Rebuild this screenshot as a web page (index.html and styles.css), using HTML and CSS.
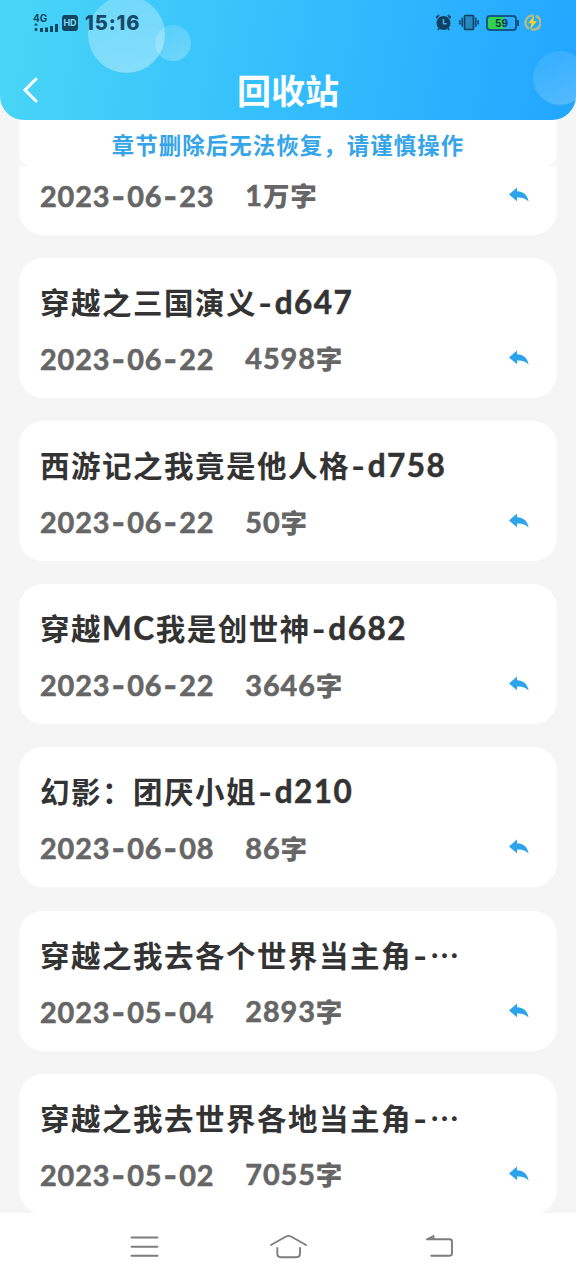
FILE: index.html
```html
<!DOCTYPE html>
<html lang="zh-CN">
<head>
  <meta charset="UTF-8" />
  <meta name="viewport" content="width=device-width, initial-scale=1.0"/>
  <title>回收站</title>
  <link rel="stylesheet" href="styles.css">
</head>
<body>
  <!-- shared icon for the restore buttons -->
  <svg width="0" height="0" class="sprite">
    <symbol id="reply" viewBox="0 0 20 16">
      <path d="M0 7.5 L8 0.5 V4.3 C14.5 4.5 18.6 8.2 19.6 14.6 C16.6 11.2 13.3 10.2 8 10.4 V14.3 Z"/>
    </symbol>
  </svg>

  <div class="screen">
    <header class="header">
      <span class="bubble bubble-big"></span>
      <span class="bubble bubble-small"></span>
      <span class="bubble bubble-right"></span>
      <div class="status-bar">
        <div class="status-left">
          <div class="network">
            <span>4G</span>
            <svg width="27" height="9" viewBox="0 0 27 9">
              <path d="M1 2.5 L3 0 L5 2.5 Z M1.8 5 h2.4 v3 h-2.4 Z M7 5 h3 v4 h-3 Z M12 4.5 h3 v4.5 h-3 Z M17 3 h3 v6 h-3 Z M22 1 h3 v8 h-3 Z"/>
            </svg>
          </div>
          <span class="hd">HD</span>
          <span class="time">15:16</span>
        </div>
        <div class="status-right">
          <svg width="17" height="17" viewBox="0 0 17 17">
            <circle cx="8.5" cy="9" r="7" fill="#123f60"/>
            <path d="M1.2 4 L4 1.2 M15.8 4 L13 1.2 M4 14.5 L2.8 16 M13 14.5 L14.2 16" stroke="#123f60" stroke-width="1.8"/>
            <path d="M8.5 5 V9.8 H11.6" fill="none" stroke="#2fb1fd" stroke-width="1.6"/>
          </svg>
          <svg width="20" height="17" viewBox="0 0 20 17">
            <rect x="5.5" y="1.5" width="9" height="14" rx="1" fill="#2689c4" stroke="#123f60" stroke-width="1.7"/>
            <path d="M3.2 3.7 V12.7 M0.8 6.3 V10.5 M16.8 3.7 V12.7 M19.2 6.3 V10.5" stroke="#123f60" stroke-width="1.5"/>
          </svg>
          <div class="battery"><span>59</span></div>
          <svg width="17" height="17" viewBox="0 0 17 17">
            <path d="M5.2 14.8 A7 7 0 0 1 9.5 1.7 M11.8 2 A7 7 0 0 1 7.3 15.3" fill="none" stroke="#b5bd83" stroke-width="2.4"/>
            <path d="M10.3 1.2 L4.3 9.3 H7.5 L6 15.8 L12.9 7 H9.3 Z" fill="#fcd01f"/>
          </svg>
        </div>
      </div>
      <div class="title-bar">
        <svg class="back" width="16" height="28" viewBox="0 0 16 28">
          <path d="M14 3 L3 14 L14 25"/>
        </svg>
        <h1>回收站</h1>
      </div>
    </header>

    <div class="notice">章节删除后无法恢复，请谨慎操作</div>

    <main class="list">
      <div class="card">
        <div class="meta">
          <span class="date">2023<i>-</i>06<i>-</i>23</span>
          <span class="count">1<b>万字</b></span>
          <svg class="restore"><use href="#reply"/></svg>
        </div>
      </div>
      <div class="card">
        <h2>穿越之三国演义<i>-</i><em>d647</em></h2>
        <div class="meta">
          <span class="date">2023<i>-</i>06<i>-</i>22</span>
          <span class="count">4598<b>字</b></span>
          <svg class="restore"><use href="#reply"/></svg>
        </div>
      </div>
      <div class="card">
        <h2>西游记之我竟是他人格<i>-</i><em>d758</em></h2>
        <div class="meta">
          <span class="date">2023<i>-</i>06<i>-</i>22</span>
          <span class="count">50<b>字</b></span>
          <svg class="restore"><use href="#reply"/></svg>
        </div>
      </div>
      <div class="card">
        <h2>穿越<em>MC</em>我是创世神<i>-</i><em>d682</em></h2>
        <div class="meta">
          <span class="date">2023<i>-</i>06<i>-</i>22</span>
          <span class="count">3646<b>字</b></span>
          <svg class="restore"><use href="#reply"/></svg>
        </div>
      </div>
      <div class="card">
        <h2>幻影：团厌小姐<i>-</i><em>d210</em></h2>
        <div class="meta">
          <span class="date">2023<i>-</i>06<i>-</i>08</span>
          <span class="count">86<b>字</b></span>
          <svg class="restore"><use href="#reply"/></svg>
        </div>
      </div>
      <div class="card">
        <h2>穿越之我去各个世界当主角<i>-</i><span class="more">…</span></h2>
        <div class="meta">
          <span class="date">2023<i>-</i>05<i>-</i>04</span>
          <span class="count">2893<b>字</b></span>
          <svg class="restore"><use href="#reply"/></svg>
        </div>
      </div>
      <div class="card">
        <h2>穿越之我去世界各地当主角<i>-</i><span class="more">…</span></h2>
        <div class="meta">
          <span class="date">2023<i>-</i>05<i>-</i>02</span>
          <span class="count">7055<b>字</b></span>
          <svg class="restore"><use href="#reply"/></svg>
        </div>
      </div>
    </main>

    <nav class="nav">
      <svg width="40" height="30" viewBox="0 0 40 30">
        <path d="M7.5 5.5 H33.5 M7.5 14.7 H33.5 M7.5 23.8 H33.5"/>
      </svg>
      <svg width="40" height="30" viewBox="0 0 40 30">
        <path d="M3 13 L18 4.5 Q20.5 3.3 23 4.5 L38 13 M9.3 16 V21.5 Q9.3 25.2 13 25.2 H28.5 Q32 25.2 32 21.5 V16"/>
      </svg>
      <svg width="40" height="30" viewBox="0 0 40 30">
        <path d="M21.5 4 L15 7.3 H37.5 Q40 7.3 40 9.8 V21.3 Q40 23.8 37.5 23.8 H19.3 M21.5 4 V6.5"/>
      </svg>
    </nav>
  </div>
</body>
</html>
```
FILE: styles.css
```css
* {
  box-sizing: border-box;
}
body {
  margin: 0;
  background: #f5f5f5;
  font-family: Lato, "Noto Sans CJK SC", sans-serif;
}
.sprite {
  display: block;
}
.screen {
  display: flex;
  flex-direction: column;
  height: 1280px;
  overflow: hidden;
}

/* header */
.header {
  position: relative;
  flex: none;
  height: 120px;
  overflow: hidden;
  border-radius: 0 0 24px 24px;
  background: linear-gradient(100deg, #49d6f6 0%, #35bffc 48%, #22a6ff 100%);
}
.bubble {
  position: absolute;
  border-radius: 50%;
}
.bubble-big {
  left: 88px;
  top: -4px;
  width: 77px;
  height: 77px;
  background: linear-gradient(160deg, rgba(255,255,255,0.24), rgba(255,255,255,0.38));
}
.bubble-small {
  left: 155px;
  top: 25px;
  width: 36px;
  height: 36px;
  background: linear-gradient(150deg, rgba(255,255,255,0.12), rgba(255,255,255,0.28));
}
.bubble-right {
  left: 533px;
  top: 51px;
  width: 54px;
  height: 54px;
  background: linear-gradient(150deg, rgba(255,255,255,0.06), rgba(255,255,255,0.24));
}
.status-bar {
  position: relative;
  display: flex;
  justify-content: space-between;
  height: 45px;
  padding: 0 34px 0 33px;
  color: #104660;
}
.status-left,
.status-right {
  display: flex;
  align-items: center;
}
.status-right {
  gap: 7px;
  padding-right: 1px;
}
.network {
  display: flex;
  flex-direction: column;
  width: 29px;
  font: bold 10px/10px Inter, sans-serif;
}
.network svg {
  fill: #104660;
}
.hd {
  width: 16px;
  height: 16px;
  border-radius: 3px;
  background: #104660;
  color: #7fdcf8;
  font: bold 9px/16px Inter, sans-serif;
  text-align: center;
}
.time {
  margin-left: 7px;
  font: 800 20px/20px Inter, sans-serif;
  letter-spacing: 0.9px;
  color: #17496c;
}
.battery {
  position: relative;
  width: 31px;
  height: 16px;
  border: 2px solid #12578a;
  border-radius: 4px;
  background: linear-gradient(90deg, #31d251 58%, #2dacff 58%);
  color: #0b3547;
  font: bold 10px/12px Inter, sans-serif;
  text-align: center;
}
.battery::after {
  content: "";
  position: absolute;
  right: -4px;
  top: 3px;
  width: 2px;
  height: 6px;
  background: #12578a;
}
.title-bar {
  position: relative;
  display: flex;
  align-items: center;
  height: 75px;
  padding: 0 22px;
}
.title-bar h1 {
  flex: 1;
  margin: 17px 16px 0 0;
  font-size: 34px;
  font-weight: 700;
  line-height: 40px;
  color: #fff;
  text-align: center;
}
.back {
  margin-top: 15px;
}
.back path {
  fill: none;
  stroke: #fff;
  stroke-width: 3;
  stroke-linecap: round;
}

/* notice */
.notice {
  flex: none;
  height: 46px;
  margin: 0 19px;
  border-radius: 0 0 12px 12px;
  background: #fff;
  color: #35a4e8;
  font-size: 22.4px;
  font-weight: 700;
  letter-spacing: 1.1px;
  line-height: 51px;
  text-align: center;
}

/* chapter list, scrolled down a little */
.list {
  display: flex;
  flex: 1;
  flex-direction: column;
  justify-content: flex-end;
  gap: 23.2px;
  min-height: 0;
  padding: 0 19px;
  overflow: hidden;
}
.card {
  display: flex;
  flex: none;
  flex-direction: column;
  justify-content: flex-end;
  height: 140px;
  padding: 0 28px 19px 21px;
  border-radius: 24px;
  background: #fff;
}
.card:last-child {
  margin-bottom: -0.8px;
}
.card h2 {
  margin: 0;
  height: 42px;
  color: #333;
  font-size: 29.5px;
  font-weight: 700;
  letter-spacing: 1.5px;
  line-height: 42px;
  white-space: nowrap;
}
.card em {
  font-size: 31.5px;
  font-style: normal;
  line-height: 1;
  -webkit-text-stroke: 0.5px;
}
.card i {
  margin: 0 1.2px;
  font-family: Inter, sans-serif;
  font-style: normal;
  line-height: 1;
}
.more {
  font-family: "Noto Sans CJK SC", sans-serif;
  line-height: 1;
}
.meta {
  display: flex;
  align-items: center;
  height: 40px;
  margin-top: 15px;
  color: #666;
  font-size: 28.8px;
  font-weight: 700;
  letter-spacing: 0.9px;
  line-height: 40px;
}
.date,
.count {
  -webkit-text-stroke: 0.6px;
}
.count {
  margin-left: 31px;
}
.count b {
  font-size: 26.5px;
  -webkit-text-stroke: 0;
}
.restore {
  width: 20px;
  height: 16px;
  margin-left: auto;
  margin-top: -2px;
  fill: #2ba4ec;
}

/* system navigation */
.nav {
  display: flex;
  flex: none;
  justify-content: center;
  align-items: center;
  gap: 104px;
  height: 67px;
  background: #fff;
}
.nav svg {
  overflow: visible;
}
.nav path {
  fill: none;
  stroke: #7d7d7d;
  stroke-width: 1.9;
  stroke-linecap: round;
  stroke-linejoin: round;
}
```
